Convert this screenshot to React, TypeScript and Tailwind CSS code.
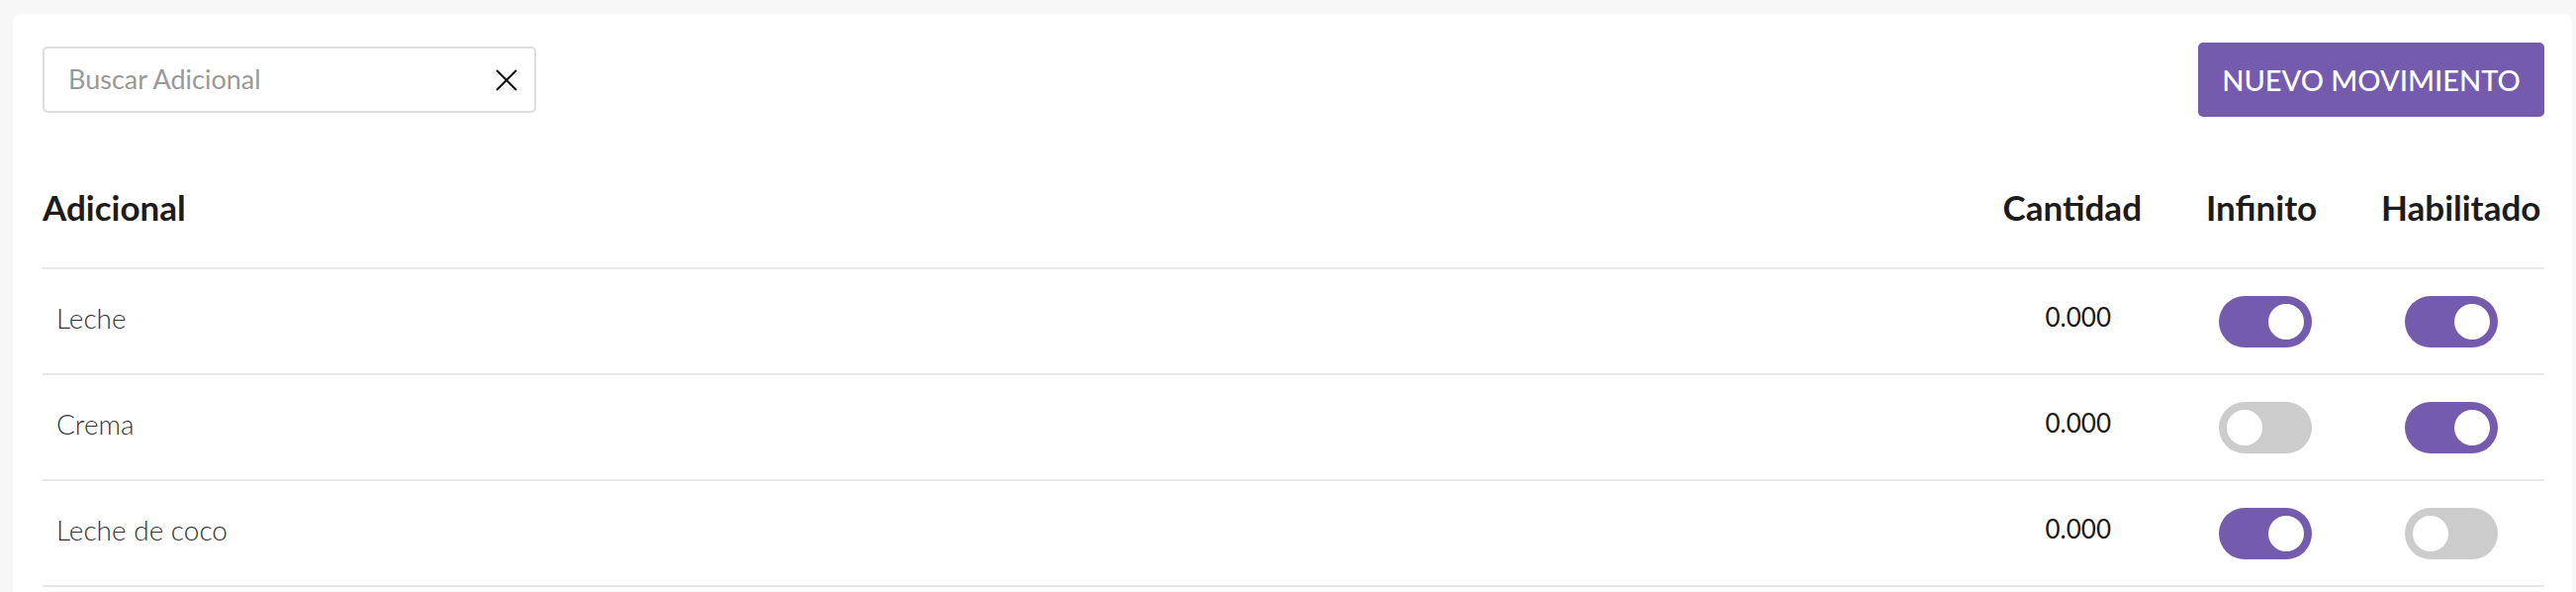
import { useState } from "react";

type Row = { name: string; qty: string; infinite: boolean; enabled: boolean };

const rows: Row[] = [
  { name: "Leche", qty: "0.000", infinite: true, enabled: true },
  { name: "Crema", qty: "0.000", infinite: false, enabled: true },
  { name: "Leche de coco", qty: "0.000", infinite: true, enabled: false },
];

function Toggle({ on }: { on: boolean }) {
  return (
    <div
      className={
        on
          ? "flex h-[52px] w-[94px] items-center justify-end rounded-full bg-[#745bad] px-[8px]"
          : "flex h-[52px] w-[94px] items-center justify-start rounded-full bg-[#cccccc] px-[8px]"
      }
    >
      <div className="h-[36px] w-[36px] rounded-full bg-white" />
    </div>
  );
}

export default function App() {
  const [query, setQuery] = useState("");

  return (
    <div className="min-h-screen bg-[#f7f7f7] pl-[13px] pr-[4px] pt-[14px] font-['Lato',sans-serif]">
      <div className="rounded-t-[8px] bg-white pb-[40px] pl-[30px] pr-[28px] pt-[29px]">
        {/* Toolbar */}
        <div className="flex h-[75px] items-center justify-between">
          <div className="flex h-[67px] w-[499px] items-center rounded-[5px] border-2 border-[#dedede] pl-[24px] pr-[17px]">
            <input
              value={query}
              onChange={(e) => setQuery(e.target.value)}
              placeholder="Buscar Adicional"
              className="min-w-0 flex-1 bg-transparent text-[27px] text-[#333] outline-none placeholder:text-[#999]"
            />
            <svg width="22" height="22" viewBox="0 0 22 22" className="shrink-0">
              <path d="M1 1L21 21M21 1L1 21" stroke="#111" strokeWidth="2" />
            </svg>
          </div>
          <button className="flex h-[75px] w-[350px] items-center justify-center rounded-[5px] bg-[#745bad] text-[29px] font-medium text-white">
            NUEVO MOVIMIENTO
          </button>
        </div>

        {/* Table header */}
        <div className="flex h-[154px] items-center border-b-2 border-[#e8e8e8] pt-[30px] text-[35px] font-bold text-[#1c1c1c]">
          <div className="flex-1">Adicional</div>
          <div className="w-[200px] pr-[25px] text-right">Cantidad</div>
          <div className="w-[200px] pl-[40px]">Infinito</div>
          <div className="w-[182px] pl-[17px]">Habilitado</div>
        </div>

        {/* Rows */}
        {rows.map((r) => (
          <div key={r.name} className="flex h-[107px] items-center border-b-2 border-[#e8e8e8]">
            <div className="flex-1 pb-[8px] pl-[14px] text-[28px] font-light text-[#333]">{r.name}</div>
            <div className="w-[200px] pb-[8px] pr-[56px] text-right text-[26px] text-[#1a1a1a]">{r.qty}</div>
            <div className="w-[200px] pl-[53px]">
              <Toggle on={r.infinite} />
            </div>
            <div className="w-[182px] pl-[41px]">
              <Toggle on={r.enabled} />
            </div>
          </div>
        ))}
      </div>
    </div>
  );
}
